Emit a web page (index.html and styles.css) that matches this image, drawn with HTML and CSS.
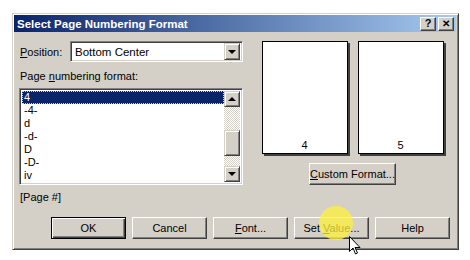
FILE: index.html
```html
<!DOCTYPE html>
<html lang="en">
<head>
    <meta charset="UTF-8">
    <title>Select Page Numbering Format</title>
    <link rel="stylesheet" href="styles.css">
</head>
<body>
<div class="dialog">
    <div class="titlebar">
        <span class="title">Select Page Numbering Format</span>
        <div class="caption-btns">
            <span class="cap-btn">?</span>
            <span class="cap-btn close">&#x2715;</span>
        </div>
    </div>

    <div class="main">
        <div class="left">
            <div class="field">
                <label class="lbl-pos"><u>P</u>osition:</label>
                <div class="combo">
                    <span class="combo-text">Bottom Center</span>
                    <span class="arrow-btn"><span class="tri down"></span></span>
                </div>
            </div>
            <div class="lbl-fmt">Page <u>n</u>umbering format:</div>
            <div class="listbox">
                <ul class="items">
                    <li class="sel">4</li>
                    <li>-4-</li>
                    <li>d</li>
                    <li>-d-</li>
                    <li>D</li>
                    <li>-D-</li>
                    <li>iv</li>
                </ul>
                <div class="scrollbar">
                    <span class="arrow-btn sb"><span class="tri up"></span></span>
                    <div class="track">
                        <span class="thumb"></span>
                    </div>
                    <span class="arrow-btn sb"><span class="tri down"></span></span>
                </div>
            </div>
            <div class="sample">[Page #]</div>
        </div>

        <div class="right">
            <div class="pages">
                <div class="page"><span>4</span></div>
                <div class="page"><span>5</span></div>
            </div>
            <button class="btn custom"><u>C</u>ustom Format...</button>
        </div>
    </div>

    <div class="footer">
        <button class="btn default">OK</button>
        <button class="btn">Cancel</button>
        <button class="btn"><u>F</u>ont...</button>
        <button class="btn">Set <u>V</u>alue...</button>
        <button class="btn">Help</button>
    </div>

    <span class="spot"></span>
    <svg class="cursor" width="12" height="19" viewBox="0 0 12 19">
        <path d="M0.5 0.5 L0.5 15.5 L4 12 L6.5 18 L8.5 17 L6 11.5 L11 11.5 Z" fill="#fff" stroke="#000" stroke-width="1"/>
    </svg>
</div>
</body>
</html>
```

FILE: styles.css
```css
body { margin: 0; background: #fff; font-family: "Liberation Sans", Arial, sans-serif; font-size: 11px; color: #000; width: 470px; height: 260px; overflow: hidden; }
u { text-decoration: underline; text-underline-offset: 1px; }

.dialog { position: relative; margin: 13px 0 0 12px; width: 447px; height: 237px; box-sizing: border-box; background: #d4d0c8; border: 1px solid; border-color: #d4d0c8 #404040 #404040 #d4d0c8; box-shadow: inset 1px 1px #fff, inset -1px -1px #808080; padding: 1px 2px 2px 1px; display: flex; flex-direction: column; }

.titlebar { height: 17px; background: linear-gradient(to right, #0a246a, #a6caf0); display: flex; align-items: center; justify-content: space-between; padding: 0 2px 0 3px; }
.title { color: #fff; font-weight: bold; font-size: 11.5px; }
.caption-btns { display: flex; gap: 2px; }
.cap-btn { width: 16px; height: 14px; box-sizing: border-box; background: #d4d0c8; border: 1px solid; border-color: #fff #404040 #404040 #fff; box-shadow: inset -1px -1px #808080; font-size: 11px; font-weight: bold; display: flex; align-items: center; justify-content: center; line-height: 1; }
.cap-btn.close { font-size: 10px; }

.main { display: flex; gap: 18px; padding: 9px 0 0 5px; }
.left { width: 224px; display: flex; flex-direction: column; }
.field { display: flex; align-items: center; height: 21px; }
.lbl-pos { width: 50px; padding-left: 1px; }
.combo { flex: 1; height: 21px; box-sizing: border-box; background: #fff; border: 1px solid; border-color: #808080 #fff #fff #808080; box-shadow: inset 1px 1px #404040, inset -1px -1px #d4d0c8; display: flex; align-items: center; padding: 2px 2px 2px 4px; }
.combo-text { flex: 1; font-size: 11.5px; }

.arrow-btn { width: 16px; height: 17px; box-sizing: border-box; background: #d4d0c8; border: 1px solid; border-color: #d4d0c8 #404040 #404040 #d4d0c8; box-shadow: inset 1px 1px #fff, inset -1px -1px #808080; display: flex; align-items: center; justify-content: center; }
.arrow-btn.sb { height: 16px; }
.tri { width: 0; height: 0; border-left: 4px solid transparent; border-right: 4px solid transparent; }
.tri.down { border-top: 4px solid #000; }
.tri.up { border-bottom: 4px solid #000; }

.lbl-fmt { margin: 8px 0 5px 1px; height: 13px; }

.listbox { height: 97px; box-sizing: border-box; background: #fff; border: 1px solid; border-color: #808080 #fff #fff #808080; box-shadow: inset 1px 1px #404040, inset -1px -1px #d4d0c8; padding: 2px; display: flex; }
.items { list-style: none; margin: 0; padding: 0; flex: 1; }
.items li { height: 13px; line-height: 13px; padding-left: 2px; }
.items li.sel { background: #0a246a; color: #fff; outline: 1px dotted #d4d0c8; outline-offset: -1px; }
.scrollbar { width: 16px; display: flex; flex-direction: column; }
.track { flex: 1; background: repeating-conic-gradient(#d4d0c8 0 25%, #fff 0 50%) 0 0 / 2px 2px; padding-top: 23px; }
.thumb { display: block; width: 16px; height: 26px; box-sizing: border-box; background: #d4d0c8; border: 1px solid; border-color: #d4d0c8 #404040 #404040 #d4d0c8; box-shadow: inset 1px 1px #fff, inset -1px -1px #808080; }

.sample { margin: 6px 0 0 1px; }

.right { display: flex; flex-direction: column; align-items: center; width: 183px; }
.pages { display: flex; gap: 10px; }
.page { width: 86px; height: 113px; box-sizing: border-box; background: #fff; border: 1px solid #000; box-shadow: 2px 2px #404040; display: flex; align-items: flex-end; justify-content: center; padding-bottom: 2px; }
.custom { margin-top: 9px; width: 87px; }

.btn { height: 22px; box-sizing: border-box; background: #d4d0c8; border: 1px solid; border-color: #fff #404040 #404040 #fff; box-shadow: inset -1px -1px #808080; font: inherit; color: #000; padding: 0; }
.footer { display: flex; gap: 6px; margin-top: auto; padding: 0 6px 8px 0; justify-content: flex-end; }
.footer .btn { width: 75px; }
.footer .btn.default { border-color: #000; box-shadow: inset 1px 1px #fff, inset -1px -1px #404040, inset -2px -2px #808080; }

.spot { position: absolute; left: 306px; top: 192px; width: 34px; height: 34px; border-radius: 50%; background: rgba(255, 240, 60, 0.75); }
.cursor { position: absolute; left: 336px; top: 222px; }
```
